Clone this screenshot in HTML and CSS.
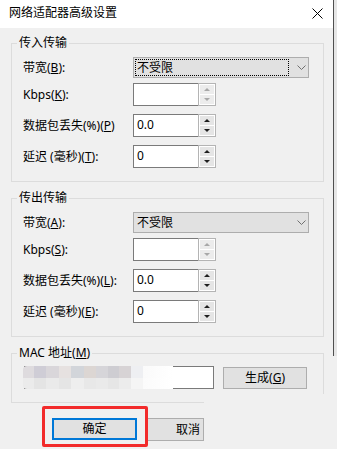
FILE: index.html
```html
<!DOCTYPE html>
<html lang="zh-CN">
<head>
    <meta charset="UTF-8">
    <title>网络适配器高级设置</title>
    <link rel="stylesheet" href="styles.css">
</head>
<body>
<div class="screen">
    <div class="dialog">
        <div class="titleBar">
            <span class="titleText">网络适配器高级设置</span>
            <svg class="closeIcon" width="11" height="11" viewBox="0 0 11 11">
                <path d="M0.5 0.5L10.5 10.5M10.5 0.5L0.5 10.5" stroke="#000" stroke-width="1" fill="none"/>
            </svg>
        </div>

        <div class="dialogBody">
            <fieldset class="group">
                <legend class="groupTitle">传入传输</legend>
                <div class="rows">
                    <div class="formRow">
                        <label class="rowLabel">带宽(<u>B</u>):</label>
                        <div class="combo">
                            <span class="comboText focused">不受限</span>
                            <svg class="chevron" width="9" height="5" viewBox="0 0 9 5"><path d="M0.5 0.5L4.5 4.5L8.5 0.5" stroke="#707070" fill="none"/></svg>
                        </div>
                    </div>
                    <div class="formRow spinRow first">
                        <label class="rowLabel">Kbps(<u>K</u>):</label>
                        <div class="spin">
                            <div class="spinField"></div>
                            <div class="spinButtons disabled">
                                <span class="spinBtn"><i class="arrowUp"></i></span>
                                <span class="spinBtn"><i class="arrowDown"></i></span>
                            </div>
                        </div>
                    </div>
                    <div class="formRow spinRow">
                        <label class="rowLabel">数据包丢失(%)(<u>P</u>)</label>
                        <div class="spin">
                            <div class="spinField">0.0</div>
                            <div class="spinButtons">
                                <span class="spinBtn"><i class="arrowUp"></i></span>
                                <span class="spinBtn"><i class="arrowDown"></i></span>
                            </div>
                        </div>
                    </div>
                    <div class="formRow spinRow">
                        <label class="rowLabel">延迟 (毫秒)(<u>T</u>):</label>
                        <div class="spin">
                            <div class="spinField">0</div>
                            <div class="spinButtons">
                                <span class="spinBtn"><i class="arrowUp"></i></span>
                                <span class="spinBtn"><i class="arrowDown"></i></span>
                            </div>
                        </div>
                    </div>
                </div>
            </fieldset>

            <fieldset class="group">
                <legend class="groupTitle">传出传输</legend>
                <div class="rows">
                    <div class="formRow">
                        <label class="rowLabel">带宽(<u>A</u>):</label>
                        <div class="combo">
                            <span class="comboText">不受限</span>
                            <svg class="chevron" width="9" height="5" viewBox="0 0 9 5"><path d="M0.5 0.5L4.5 4.5L8.5 0.5" stroke="#707070" fill="none"/></svg>
                        </div>
                    </div>
                    <div class="formRow spinRow first">
                        <label class="rowLabel">Kbps(<u>S</u>):</label>
                        <div class="spin">
                            <div class="spinField"></div>
                            <div class="spinButtons disabled">
                                <span class="spinBtn"><i class="arrowUp"></i></span>
                                <span class="spinBtn"><i class="arrowDown"></i></span>
                            </div>
                        </div>
                    </div>
                    <div class="formRow spinRow">
                        <label class="rowLabel">数据包丢失(%)(<u>L</u>):</label>
                        <div class="spin">
                            <div class="spinField">0.0</div>
                            <div class="spinButtons">
                                <span class="spinBtn"><i class="arrowUp"></i></span>
                                <span class="spinBtn"><i class="arrowDown"></i></span>
                            </div>
                        </div>
                    </div>
                    <div class="formRow spinRow">
                        <label class="rowLabel">延迟 (毫秒)(<u>E</u>):</label>
                        <div class="spin">
                            <div class="spinField">0</div>
                            <div class="spinButtons">
                                <span class="spinBtn"><i class="arrowUp"></i></span>
                                <span class="spinBtn"><i class="arrowDown"></i></span>
                            </div>
                        </div>
                    </div>
                </div>
            </fieldset>

            <fieldset class="group macGroup">
                <legend class="groupTitle">MAC 地址(<u>M</u>)</legend>
                <div class="macRow">
                    <div class="macField"><div class="mosaic"></div></div>
                    <button class="winButton genButton" type="button">生成(<u>G</u>)</button>
                </div>
            </fieldset>
            <div class="macTail"></div>

            <div class="bottomBar">
                <div class="okHighlight">
                    <button class="winButton okButton" type="button">确定</button>
                </div>
                <button class="winButton cancelButton" type="button">取消</button>
            </div>
        </div>
    </div>
    <div class="behind"></div>
</div>
</body>
</html>
```

FILE: styles.css
```css
body {
    margin: 0;
    padding: 0;
    background-color: #f0f0f0;
    font-family: "Noto Sans", "Noto Sans CJK SC", sans-serif;
    font-size: 12px;
    color: #000;
}
.screen {
    display: flex;
    width: 337px;
    height: 449px;
    overflow: hidden;
}
.dialog {
    width: 333px;
    flex-shrink: 0;
    background-color: #f0f0f0;
}
.behind {
    width: 3px;
    height: 356px;
    border-left: 1px solid #4f4f4f;
    background-color: #e6e6e6;
}
.titleBar {
    height: 28px;
    display: flex;
    align-items: center;
    justify-content: space-between;
    padding: 0 10px 2px 9px;
    box-sizing: border-box;
    background-color: #fff;
}
.titleText {
    line-height: 16px;
}
.dialogBody {
    padding: 7px 9px 0 11px;
}
.group {
    margin: 8px 0 0 0;
    padding: 0 0 13px 0;
    border: 1px solid #dcdcdc;
    min-width: 0;
}
.group:first-child {
    margin-top: 0;
}
.groupTitle {
    margin-left: 5px;
    padding: 0 2px;
    line-height: 16px;
}
.rows {
    padding: 6px 0 0 11px;
}
.formRow {
    display: flex;
    align-items: center;
}
.spinRow {
    margin-top: 8px;
}
.spinRow.first {
    margin-top: 5px;
}
.rowLabel {
    width: 110px;
    line-height: 16px;
    white-space: nowrap;
    overflow: hidden;
}
.combo {
    width: 176px;
    height: 21px;
    box-sizing: border-box;
    border: 1px solid #adadad;
    background-color: #e1e1e1;
    display: flex;
    align-items: center;
    padding: 1px;
}
.comboText {
    width: 154px;
    height: 17px;
    box-sizing: border-box;
    border: 1px dotted transparent;
    padding-left: 1px;
    line-height: 15px;
}
.comboText.focused {
    border-color: #000;
}
.chevron {
    margin-left: 8px;
}
.spin {
    display: flex;
    height: 23px;
}
.spinField {
    width: 65px;
    box-sizing: border-box;
    border: 1px solid #7a7a7a;
    border-right: none;
    background-color: #fff;
    padding-left: 3px;
    line-height: 20px;
}
.spinButtons {
    width: 18px;
    box-sizing: border-box;
    border: 1px solid #b4b4b4;
    background-color: #fff;
    display: flex;
    flex-direction: column;
    padding: 1px;
    gap: 1px;
}
.spinBtn {
    flex: 1;
    background-color: #e5e5e5;
    display: flex;
    align-items: center;
    justify-content: center;
}
.arrowUp, .arrowDown {
    width: 0;
    height: 0;
    border-left: 3px solid transparent;
    border-right: 3px solid transparent;
}
.arrowUp {
    border-bottom: 3px solid #1e1e1e;
}
.arrowDown {
    border-top: 3px solid #1e1e1e;
}
.spinButtons.disabled .arrowUp {
    border-bottom-color: #a8a8a8;
}
.spinButtons.disabled .arrowDown {
    border-top-color: #a8a8a8;
}
.spinButtons.disabled .spinBtn {
    background-color: #ececec;
}
.macGroup {
    border-bottom: none;
    padding-bottom: 5px;
}
.macRow {
    display: flex;
    align-items: center;
    padding: 5px 0 0 12px;
}
.macField {
    width: 190px;
    height: 23px;
    box-sizing: border-box;
    border: 1px solid #7a7a7a;
    background-color: #fff;
}
.mosaic {
    width: 150px;
    height: 23px;
    margin: -1px 0 0 -2px;
    border-radius: 4px 0 0 4px;
    background-image:
        linear-gradient(to right, #dedbde 0, #dedbde 11px, #cfcdd6 11px, #cfcdd6 23px, #d9d6da 23px, #d9d6da 36px, #e6e1e0 36px, #e6e1e0 48px, #d2d5da 48px, #d2d5da 61px, #dcd6d3 61px, #dcd6d3 73px, #d6d5d9 73px, #d6d5d9 85px, #cecdd2 85px, #cecdd2 96px, #d7d3d5 96px, #d7d3d5 108px, #eeeff2 108px, #eeeff2 120px, #fafafa 120px, #ffffff 150px),
        linear-gradient(to right, #ebebeb 0, #ebebeb 11px, #e4e4e4 11px, #e4e4e4 23px, #eaeaea 23px, #eaeaea 36px, #e5e5e5 36px, #e5e5e5 48px, #eeeeee 48px, #eeeeee 61px, #e8e8e8 61px, #e8e8e8 73px, #eaeaea 73px, #eaeaea 85px, #e6e6e6 85px, #e6e6e6 96px, #ececec 96px, #ececec 108px, #f5f5f5 108px, #f5f5f5 120px, #fbfbfb 120px, #ffffff 150px);
    background-size: 100% 12px, 100% 11px;
    background-position: left top, left bottom;
    background-repeat: no-repeat;
}
.winButton {
    font-family: "Noto Sans", "Noto Sans CJK SC", sans-serif;
    font-size: 12px;
    color: #000;
    background-color: #e1e1e1;
    border: 1px solid #adadad;
    box-sizing: border-box;
    padding: 0;
    margin: 0;
    line-height: 16px;
}
.genButton {
    width: 84px;
    height: 22px;
    margin-left: 9px;
}
.macTail {
    width: 193px;
    height: 9px;
    box-sizing: border-box;
    border-left: 1px solid #dcdcdc;
    border-bottom: 1px solid #dcdcdc;
}
.bottomBar {
    display: flex;
    align-items: flex-start;
    margin-top: 3px;
    padding-left: 31px;
}
.okHighlight {
    border: 3px solid #f22b2b;
    border-radius: 2px;
    padding: 9px 8px 4px 7px;
}
.okButton {
    width: 85px;
    height: 22px;
    border: 2px solid #0078d7;
}
.cancelButton {
    width: 56px;
    height: 23px;
    margin-top: 12px;
    border-left: none;
    text-align: left;
    padding-left: 28px;
}
```
